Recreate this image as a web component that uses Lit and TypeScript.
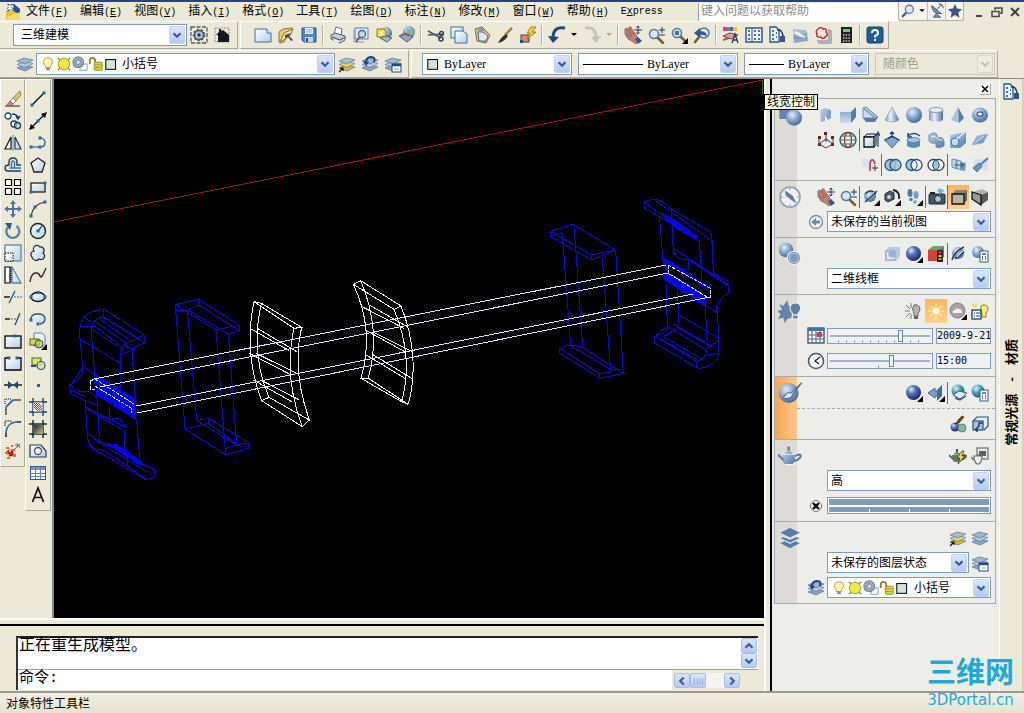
import { LitElement, html, svg, css, nothing, TemplateResult, SVGTemplateResult } from "lit";
import { customElement } from "lit/decorators.js";
import { classMap } from "lit/directives/class-map.js";

const NAVY = "#1b3a63";
const STEEL = "#5f83ad";

/* Shared icon pieces, all drawn in an 18 x 18 box */
const layers = (top = "#9db6cf", mid = "#b9cbdc", low = "#8aa4bf") => svg`
  <path d="M1 13l7-3 9 2-8 4z" fill=${low} stroke="#5a7693" stroke-width=".7"/>
  <path d="M1 9.500l7-3 9 2-8 4z" fill=${mid} stroke="#5a7693" stroke-width=".7"/>
  <path d="M1 6l7-3 9 2-8 4z" fill=${top} stroke="#5a7693" stroke-width=".7"/>`;
const lens = (x = 7, y = 7) => svg`
  <path d="M${x + 3} ${y + 3}l6 6" stroke="#7a5a38" stroke-width="2.600" stroke-linecap="round"/>
  <circle cx=${x} cy=${y} r="4.500" fill="#d5e6f7" stroke="#56789f" stroke-width="1.500"/>`;
const flyout = svg`<path d="M18 12v6h-6z" fill="#000"/>`;
const sphere = (x = 9, y = 9, r = 7) => svg`<circle cx=${x} cy=${y} r=${r} fill="url(#ball)"/>`;
const deep = svg`<circle cx="8.500" cy="8.500" r="7.500" fill="url(#deep)"/>`;
const dots = (...p: number[][]) => p.map(([x, y]) => svg`<rect x=${x - 1.5} y=${y - 1.5} width="3" height="3" fill="#1f6aa8"/>`);
const hand = svg`
  <path d="M1 3l2-1 2 2 0-3 2 0 2 4 3 3 1 3 3 3-4 4-4-3-4-2-3-5z" fill="#c08078" stroke="#7a4a48" stroke-width=".7"/>
  <path d="M3 4l5 6M5 3l5 6M2 8l5 3" stroke="#7f4c4a" stroke-width=".7" fill="none"/>
  <path d="M11 13l3-2 4 4-4 3z" fill="#35598c"/>
  <path d="M14 0v8M10 4h8M12.500 1.500L14 0l1.500 1.500M12.500 6.500L14 8l1.500-1.500" stroke="#1b3a63" fill="none"/>`;
const card = svg`<rect x="9" y="6" width="8" height="11" fill="#fff" stroke="#2b5c93"/><path d="M11 9h4M11 12h1M14 12h1M11 14h1M14 14h1" stroke="#2b5c93" stroke-width="1.500"/>`;
const teapot = (c = "url(#steel)", line = "#66809c") => svg`<path d="M3 8h10c0 4-1 6-2 7H5c-1-1-2-3-2-7zM5 7.500c0-3 6-3 6 0z" fill=${c}/><path d="M8 2v3" stroke=${line} stroke-width="2"/><path d="M13 9q4-2 4 0t-5 4M4 12L0 8" fill="none" stroke=${line} stroke-width="1.700"/>`;

const ICONS: Record<string, SVGTemplateResult> = {
  app: svg`<path d="M3 1h7l6 5v8H3z" fill="#234f96"/><path d="M2 9l6-2 8 5v5H2z" fill="#e8c23a"/><path d="M3 14l13-5v8H3z" fill="#f5dc6c"/><path d="M6 1v7M2 4h8M3 2l6 5M9 2L3 7" stroke="#fff" stroke-width="1.200"/>`,
  gear: svg`<rect x="1" y="1" width="16" height="16" fill="none" stroke="#4b5c6c" stroke-width="1.300" stroke-dasharray="4 1.500"/><circle cx="9" cy="9" r="5" fill="#8fa5b8" stroke="#3f5468" stroke-width="2.500" stroke-dasharray="2 1.500"/><circle cx="9" cy="9" r="4.500" fill="#b6c6d4" stroke="#3f5468" stroke-width="1.300"/><circle cx="9" cy="9" r="1.700" fill="#26384a"/>`,
  home: svg`<rect x="2" y="2" width="14" height="14" fill="none" stroke="#8a8f94" stroke-dasharray="2 1"/><path d="M3 9l3-3V3h2v2l2-1 6 5v7H5V9z" fill="#15181f"/>`,
  newfile: svg`<path d="M1 3h12l4 4v9H1z" fill="url(#sheet)" stroke="#3a6ea5"/><path d="M13 3v4h4" fill="#fff" stroke="#3a6ea5"/>`,
  open: svg`<path d="M2 6l4-3 9-1 1 2-4 3-5 9-4 1-1-1z" fill="#e6cf7a" stroke="#8f7430"/><path d="M3 16l4-9 9-4-3 7z" fill="#f3e4a2" stroke="#8f7430"/><path d="M8 9l6-2-2 3 4 4-2 1-3-4-3 1z" fill="#3d4e63"/>`,
  save: svg`<path d="M2 2h14v14H4l-2-2z" fill="#4f86c4" stroke="#23508a"/><rect x="5" y="2" width="8" height="6" fill="#e7f0fa"/><path d="M6 4h6M6 6h6" stroke="#7a9bc0" stroke-width=".8"/><rect x="5" y="11" width="8" height="5" fill="#c4d4e6"/><rect x="6" y="12" width="2" height="4" fill="#23508a"/>`,
  print: svg`<path d="M5 8l2-7 6 2-1 6z" fill="#fff" stroke="#5c6c80"/><path d="M2 9l4-2 10 3v4l-5 3-9-4z" fill="#c9ced8" stroke="#4c5c73"/><path d="M3 11l8 3 5-3" stroke="#3a4a62" fill="none"/><path d="M5 14l5 2" stroke="#fff" stroke-width="1.500"/>`,
  preview: svg`<path d="M3 2h13v11H3z" fill="#dbe9f6" stroke="#5d83ad"/><path d="M2 4v12h10" stroke="#7b9abb" fill="none"/><circle cx="10" cy="8" r="3.500" fill="#c3daf1" stroke="#3c6798" stroke-width="1.300"/><path d="M7.500 11L4 16" stroke="#7b5a39" stroke-width="2"/>`,
  publish: svg`${sphere(11, 7, 6)}<path d="M2 3h7l2 2v6H2z" fill="#f2d84e" stroke="#8e7d24"/><path d="M4 6l4 3M8 5l-4 5" stroke="#fff"/><path d="M5 12l6-2 6 2-5 4z" fill="#a8b8c8" stroke="#4e6175"/>`,
  web: svg`${sphere(11, 6, 6)}<path d="M9 2q4 3 6 1l2 4-5 4-4-2z" fill="#7fb48f"/><path d="M1 10l6-3 8 4-6 5z" fill="#8ea6c0" stroke="#41607f"/><path d="M3 10l4-2 4 2" stroke="#b8524a" stroke-width="1.500" fill="none"/>`,
  cut: svg`<path d="M1 5l13 7M1 9l15-1" stroke="#4a5566" stroke-width="1.500"/><circle cx="14" cy="13" r="2" fill="none" stroke="#2d3c57" stroke-width="1.500"/><circle cx="14.500" cy="7.500" r="2" fill="none" stroke="#2d3c57" stroke-width="1.300"/>`,
  copy: svg`<rect x="1" y="1" width="12" height="11" fill="url(#sheet)" stroke="#3a6ea5"/><path d="M5 5h8l4 3v9H5z" fill="url(#sheet)" stroke="#3a6ea5"/>`,
  paste: svg`<path d="M2 3l7-2 8 8-4 8-9-2z" fill="#e3c35d" stroke="#8d6f24"/><path d="M5 6h5l5 4-2 5H6z" fill="#dbe8f7" stroke="#4b6f9c"/><path d="M5 2l5 0 1 3-6 0z" fill="#8a98a8"/>`,
  brush: svg`<path d="M16 2L9 9" stroke="#a3804c" stroke-width="2.500"/><path d="M10 8l2 2q-4 6-10 7 3-6 8-9z" fill="#35332e"/>`,
  block: svg`<rect x="2" y="9" width="8" height="7" fill="#e98662" stroke="#24466f"/><path d="M12 1L8 7h3l-3 6 9-7h-4l4-5z" fill="#f5d427" stroke="#8a6c10" stroke-width=".8"/><rect x="1" y="14" width="3" height="3" fill="#1f4a80"/>`,
  undo: svg`<path d="M17 2Q5 0 5 12" fill="none" stroke="#21457b" stroke-width="3"/><path d="M0 10l5 7 6-6z" fill="#21457b"/>`,
  redo: svg`<path d="M2 2q11-2 11 10" fill="none" stroke="#c3c3bd" stroke-width="3"/><path d="M8 11l5 6 5-7z" fill="#c3c3bd"/>`,
  down: svg`<path d="M6 7h6l-3 3z" fill="#000"/>`,
  downoff: svg`<path d="M6 7h6l-3 3z" fill="#aca899"/>`,
  pan: hand,
  zoom: svg`${lens(7, 8)}<path d="M15 1v6M12 4h6M12 9h6" stroke="#1b3a63"/>`,
  zoomwin: svg`${lens()}<rect x="5" y="5" width="4" height="4" fill="#4d6f9b"/>${flyout}`,
  zoomprev: svg`<path d="M7 10l-5 6" stroke="#7a5a38" stroke-width="2.600" stroke-linecap="round"/><circle cx="11" cy="7" r="5" fill="#d5e6f7" stroke="#56789f" stroke-width="1.500"/><path d="M1 7l6-5v3q7 0 7 6-3-3-7-2v3z" fill="#31588c"/>`,
  props: svg`<path d="M1 1h14v4H1z" fill="#d93a92"/><path d="M5 1h3v4H5z" fill="#3cab54"/><path d="M8 1h3v4H8z" fill="#3767d1"/><path d="M11 1h4v4h-4z" fill="#f3b82d"/><path d="M1 10l7-3 8 2-7 4z" fill="#d3a59a" stroke="#76443e"/><path d="M10 17l3-9 3 9M11 14h4" fill="none" stroke="#27374d" stroke-width="1.300"/><path d="M1 14l6-2" stroke="#a85b4e" stroke-width="2"/>`,
  design: svg`<rect x="1" y="2" width="16" height="14" fill="#e9f2fb" stroke="#2c5686" stroke-width="1.500"/><path d="M7 2v14" stroke="#2c5686"/><path d="M3 5h2M3 9h2M3 13h2M9 5h2M13 5h2M9 9h2M13 9h2M9 13h2M13 13h2" stroke="#1e4877" stroke-width="1.500"/>`,
  palettes: svg`<path d="M2 1h6l3 3v12H2z" fill="#e6f0fa" stroke="#2c5686" stroke-width="1.300"/><path d="M4 5h2M4 9h2M4 13h2M8 7h1M8 11h1" stroke="#1e4877" stroke-width="1.700"/><path d="M9 4q5-1 6 6" fill="none" stroke="#1e3c66" stroke-width="1.500"/><path d="M12 10h5v6h-5z" fill="#33547e"/>`,
  sheets: svg`<path d="M2 3l13 1 2 4-14 2z" fill="#a8bfd6"/><path d="M2 9l14-2 1 8-14 2z" fill="#8ba8c6"/><path d="M4 6l10 6" stroke="#e9f1f8" stroke-width="3"/><path d="M3 12l13 0" stroke="#7089a4"/>`,
  markup: svg`<path d="M4 17h13V4M15 3v12H3" stroke="#6a7d92" fill="none"/><rect x="1" y="1" width="12" height="12" fill="#fbe9e6"/><path d="M4 3q3-3 5 0 4-1 3 3 3 3-1 5-2 3-4 0-5 1-4-3-2-3 1-5z" fill="none" stroke="#cf2b2b" stroke-width="1.500"/>`,
  calc: svg`<rect x="4" y="1" width="11" height="16" fill="#201f25"/><rect x="6" y="3" width="7" height="3" fill="#7fbf88"/><path d="M6 9h7M6 12h7M6 15h7" stroke="#d8c1c1" stroke-width="1.500" stroke-dasharray="1.500 1.200"/>`,
  help: svg`<rect x="1" y="1" width="16" height="16" rx="2" fill="#1f5e9c" stroke="#173f6c"/><path d="M6 7q0-3 3-3t3 3q0 2-3 3v1.500M9 13v2" fill="none" stroke="#fff" stroke-width="2"/>`,
  search: svg`<path d="M8 10l-5 5" stroke="#4a5b92" stroke-width="2.500" stroke-linecap="round"/><circle cx="10.500" cy="7" r="4.500" fill="#dfe8fc" stroke="#6679ad" stroke-width="1.500"/>`,
  dish: svg`<path d="M3 3q1 10 11 9z" fill="#7d93b6" stroke="#2c456f"/><path d="M8 8l5-5M8 12l-3 4h8z" stroke="#2c456f" fill="#8fa3c0"/><path d="M12 2l3 1M11 1q5 0 5 5" stroke="#2c456f" fill="none"/>`,
  star: svg`<path d="M9 1l2.300 5.300L17 7l-4.300 3.700L14 16.500 9 13.500 4 16.500l1.300-5.800L1 7l5.700-.7z" fill="#3c5682"/>`,
  layer: layers(),
  layermake: svg`${layers("#a9bfd3", "#f0d75b", "#d8b93a")}<path d="M1 17l4-4M2 13h3v3" stroke="#111" fill="none" stroke-width="1.200"/>`,
  layerprev: svg`${layers()}<path d="M5 8q0-6 5-6t3 5" fill="none" stroke="#1f4478" stroke-width="2"/><path d="M2 6l3 5 3-4z" fill="#1f4478"/>`,
  layerstate: svg`${layers()}<rect x="8" y="9" width="9" height="8" fill="#fff" stroke="#1c4e8a"/><path d="M8 10h9" stroke="#1c4e8a" stroke-width="2.500"/><path d="M10 14h5" stroke="#8aa" />`,
  bulb: svg`<path d="M9 2q5 0 5 5 0 2-2 4v2H6v-2Q4 9 4 7q0-5 5-5z" fill="#fdf6a5" stroke="#b19b3d"/><path d="M7 13h4v3H7z" fill="#8e8e7c"/>`,
  sun: svg`<path d="M2 2l14 14M16 2L2 16" stroke="#9a8f33" stroke-width="1.500"/><circle cx="9" cy="9" r="6.500" fill="#f5ea3c" stroke="#98902c"/>`,
  freeze: svg`<rect x="9" y="9" width="8" height="7" fill="#fff" stroke="#8a97a6"/><circle cx="7" cy="7" r="6" fill="#a4b4c3" stroke="#6f8395" stroke-width="1.300"/><path d="M7 2v10M2 7h10M3.500 3.500l7 7M10.500 3.500l-7 7" stroke="#7b8fa2"/><circle cx="7" cy="7" r="2.500" fill="#d5dee6" stroke="#6f8395"/>`,
  lock: svg`<path d="M2 9V5q0-3 3-3t3 3v3" fill="none" stroke="#8d8426" stroke-width="2"/><rect x="7" y="7" width="9" height="9" rx="1" fill="#e3d83a" stroke="#8d8426"/><path d="M8 10h7M8 13h7" stroke="#8d8426" stroke-width=".8"/>`,
  swatch: svg`<rect x="2" y="4" width="11" height="11" fill="#d3e2dc" stroke="#111" stroke-width="1.200"/>`,
  erase: svg`<path d="M1 16h15" stroke="#222"/><path d="M16 1L9 8l3 3 5-6z" fill="#dcc85a" stroke="#6d6222" stroke-width=".7"/><path d="M9 8l3 3-3 3-3-3z" fill="#eef0f3" stroke="#666" stroke-width=".7"/><path d="M6 11l3 3-2 2H4l-1-1z" fill="#d77d78" stroke="#7c3e3b" stroke-width=".7"/>`,
  copyobj: svg`<circle cx="4" cy="4" r="3" fill="#fff" stroke=${NAVY} stroke-width="1.300"/><circle cx="10" cy="12" r="3" fill="#fff" stroke=${NAVY} stroke-width="1.300"/><circle cx="13.500" cy="13.500" r="3" fill="#cfe0f2" fill-opacity=".6" stroke=${NAVY} stroke-width="1.300"/><path d="M8 2q5 0 6 4M12 4l2 3 2-3" fill="none" stroke=${NAVY} stroke-width="1.500"/>`,
  mirror: svg`<path d="M7 3v12H1z" fill="#fff" stroke="#111" stroke-width="1.200"/><path d="M11 3v12h6z" fill="#cfe0f2" stroke=${NAVY} stroke-width="1.200"/><path d="M9 1v16" stroke=${STEEL}/>`,
  offset: svg`<path d="M17 15H4q-3 0-3-3t4-3V6q0-4 4-4t4 4v3h4" fill="none" stroke=${NAVY} stroke-width="1.400"/><path d="M17 12H5.500M7.500 12V7q0-2 1.500-2t1.500 2v5" fill="none" stroke="#3572b0" stroke-width="1.400"/>`,
  array: svg`<path d="M1.500 1.500h6v6h-6zM10.500 10.500h6v6h-6zM1.500 10.500h6v6h-6zM10.500 1.500h6v6h-6z" fill="#fff" stroke="#000" stroke-width="1.200"/>`,
  move: svg`<path d="M9 0l3 4h-2v4h4V6l4 3-4 3v-2h-4v4h2l-3 4-3-4h2v-4H4v2L0 9l4-3v2h4V4H6z" fill="#4d769f"/>`,
  rotate: svg`<path d="M12.500 4A6.500 6.500 0 1 1 4 5" fill="none" stroke="#5f7f9f" stroke-width="2.300"/><path d="M1 1l7 0-2 7z" fill="#2c5780"/>`,
  scale: svg`<rect x="1" y="1" width="16" height="16" fill="url(#sheet)" stroke=${STEEL} stroke-width="1.300"/><rect x="1" y="9" width="8" height="8" fill="#fff" stroke="#000" stroke-dasharray="1.500 1"/>`,
  stretch: svg`<path d="M8 1v16h9z" fill="url(#sheet)" stroke=${STEEL} stroke-width="1.300"/><path d="M1 1h5v16H1z" fill="#fff" stroke="#000" stroke-width="1.200"/><path d="M7 1v16" stroke="#000" stroke-dasharray="1 1"/>`,
  trim: svg`<path d="M0 9h6" stroke="#000" stroke-width="1.300"/><path d="M10 9h8" stroke="#3572b0" stroke-dasharray="2 1"/><path d="M5 15L11 3" stroke="#244d77" stroke-width="1.300"/>`,
  extend: svg`<path d="M1 9h5" stroke="#000" stroke-width="1.300"/><path d="M7 9h5" stroke="#3572b0" stroke-dasharray="2 1"/><path d="M11 15l5-12" stroke="#244d77" stroke-width="1.300"/>`,
  breakpt: svg`<rect x="1" y="4" width="16" height="12" fill="url(#sheet)" stroke="#000" stroke-width="1.300"/>${dots([11, 4])}`,
  breakln: svg`<path d="M5 4H1v12h16V4h-4" fill="url(#sheet)" stroke="#000" stroke-width="1.300"/>${dots([5, 4], [13, 4])}`,
  join: svg`<path d="M0 9h18" stroke="#000" stroke-width="1.300"/><path d="M4 5l5 4-5 4zM14 5L9 9l5 4z" fill="#214a73"/>`,
  chamfer: svg`<path d="M2 17V9l7-7h8" fill="none" stroke="#000"/><path d="M2 9l7-7" stroke="#2f6ba5" stroke-width="1.800"/><path d="M1 6V1h7" fill="none" stroke="#000" stroke-dasharray="1 1"/>`,
  fillet: svg`<path d="M2 17v-5Q3 3 12 2h5" fill="none" stroke="#2f6ba5" stroke-width="1.600"/><path d="M2 17v-4M13 2h4M1 6V1h7" fill="none" stroke="#000" stroke-dasharray="1.500 1"/>`,
  explode: svg`<circle cx="6" cy="11" r="3.500" fill="#a82a17"/><path d="M2 5h3v2H2zM8 7h3v2H8zM1 10h3v2H1zM9 12h3v3H9zM3 15h3v2H3zM7 3h2v2H7z" fill="#e86a2c"/><path d="M5 8h2v2H5zM3 12h2v2H3z" fill="#f8c651"/><path d="M9 9l7-7M11 3l5 1M13 1l3 5" stroke="#66707c"/>`,
  line: svg`<path d="M3 15L15 3" stroke="#000" stroke-width="1.300"/>${dots([3, 15], [15, 3])}`,
  xline: svg`<path d="M2 16L16 2" stroke="#000" stroke-width="1.300"/><path d="M0 18l2-6 4 4zM18 0l-6 2 4 4z" fill="#000"/>${dots([9, 9])}`,
  pline: svg`<path d="M2 13h9q5 0 5-4t-4-5" fill="none" stroke="#254e78" stroke-width="1.200"/>${dots([2, 13], [11, 13], [11, 4])}`,
  polygon: svg`<path d="M9 2l7 5-3 9H5L2 7z" fill="url(#sheet)" stroke="#222" stroke-width="1.300"/>`,
  rect: svg`<rect x="2" y="5" width="14" height="9" fill="url(#sheet)" stroke="#222" stroke-width="1.300"/>${dots([2, 14], [16, 5])}`,
  arc: svg`<path d="M2 16Q4 4 16 2" fill="none" stroke="#222" stroke-width="1.200"/>${dots([2, 16], [6, 7], [16, 2])}`,
  circle: svg`<circle cx="9" cy="9" r="7.500" fill="url(#sheet)" stroke="#222" stroke-width="1.400"/><path d="M9 9l4-5" stroke="#1f6aa8" stroke-width="1.500"/>${dots([9, 9])}`,
  cloud: svg`<path d="M5 7a3.500 3.500 0 1 1 6-4 3.500 3.500 0 0 1 3 6 3.500 3.500 0 1 1-4 6 4 4 0 0 1-7-2 3.500 3.500 0 0 1 2-6z" fill="url(#sheet)" stroke="#222" stroke-width="1.200"/>`,
  spline: svg`<path d="M1 16Q2 8 6 7t5 3 6-8" fill="none" stroke="#222" stroke-width="1.300"/>`,
  ellipse: svg`<ellipse cx="9" cy="9" rx="7" ry="4.500" fill="url(#sheet)" stroke="#111" stroke-width="1.400"/>${dots([2, 9], [16, 9], [9, 4.5])}`,
  ellarc: svg`<path d="M2 9q0-5 7-5t7 5q0 4-5 5" fill="url(#sheet)" stroke="#35526f" stroke-width="1.400"/>${dots([2, 10], [9, 14])}`,
  insblock: svg`<path d="M5 1h8l3 3v10H5z" fill="#e9f1fb" stroke=${STEEL}/><rect x="1" y="7" width="9" height="6" fill="#d8de4b" stroke="#46631f"/><circle cx="10" cy="12" r="4" fill="#b9cf6a" fill-opacity=".7" stroke="#2d552c"/>${flyout}`,
  mkblock: svg`<rect x="3" y="4" width="9" height="7" fill="#e2e46a" stroke="#46631f"/><circle cx="12" cy="11.500" r="4" fill="#dfe49a" fill-opacity=".8" stroke="#26517c" stroke-width="1.200"/><path d="M2 12h5" stroke="#26517c" stroke-width="2"/>`,
  point: svg`<rect x="8" y="8" width="3" height="3" fill="#1f6aa8"/>`,
  hatch: svg`<path d="M4 0v18M14 0v18M0 4h18M0 14h18" stroke="#1b3a63" stroke-width="1.300"/><rect x="4.500" y="4.500" width="9" height="9" fill="#fff"/><path d="M5 5l8 8M5 9l4 4M9 5l4 4M5 7l6 6M7 5l6 6" stroke="#2b5c93"/>`,
  gradient: svg`<path d="M4 0v18M14 0v18M0 4h18M0 14h18" stroke="#1b2a43" stroke-width="1.500"/><path d="M5 5h9v9H5z" fill="url(#olive)"/>`,
  region: svg`<path d="M1 3h11l5 6v6H1z" fill="url(#sheet)" stroke=${NAVY} stroke-width="1.200"/><circle cx="9" cy="9" r="3.500" fill="#fff" stroke="#3c556f" stroke-width="1.300"/>`,
  table: svg`<rect x="1.500" y="2.500" width="15" height="13" fill="#fff" stroke="#33588f"/><path d="M2 3h14v3H2z" fill="#6f93c8"/><path d="M6.500 3v12M11.500 3v12M2 9.500h14M2 12.500h14" stroke="#5c82bb"/>`,
  text: svg`<path d="M3.500 16L9 2l5.500 14M5.500 11.500h7" fill="none" stroke="#111" stroke-width="1.700"/>`,
  polysolid: svg`<path d="M3 4l5-2 3 1v5l-3 1v6l-4 1z" fill="url(#steel)" opacity=".75"/><path d="M8 9l3-1V3l3 1v8l-3 2z" fill="#7ea1c6"/>`,
  box: svg`<path d="M1 6l5-5h11l-5 5z" fill="#e2edf8"/><path d="M1 6h11v11H1z" fill="url(#steelv)"/><path d="M12 6l5-5v10l-5 6z" fill="#587ba6"/>`,
  wedge: svg`<path d="M2 2l12 10H2z" fill="#c8dcf0" stroke="#6f8fb1"/><path d="M2 2l3-1 12 10-3 1z" fill="#a9c4de" stroke="#6f8fb1"/><path d="M2 12h12l3-1-3 5H5z" fill="#587ba6"/>`,
  cone: svg`<path d="M9 1L2 14q7 4 14 0z" fill="url(#steelh)" stroke="#7d95ae" stroke-width=".6"/>`,
  sphere: sphere(9, 9, 8),
  cylinder: svg`<path d="M2 4v10q7 4 14 0V4z" fill="url(#steelh)"/><ellipse cx="9" cy="4" rx="7" ry="2.500" fill="#e3edf7" stroke="#6f8cab" stroke-width=".8"/>`,
  pyramid: svg`<path d="M9 1L2 14l8 3z" fill="#a9c3dd"/><path d="M9 1l1 16 5-5z" fill="#557ba8"/>`,
  torus: svg`<ellipse cx="9" cy="9" rx="8" ry="7.500" fill="url(#ball)"/><ellipse cx="9" cy="8" rx="3" ry="2.200" fill="#e9eef4" stroke="#3f6087" stroke-width="1.300"/>`,
  ucs: svg`<path d="M9 2v6l-7 5M9 8l7 5M2 6v7l7 4 7-4V6" fill="none" stroke="#5c3f3f"/><path d="M7 1h3v3H7zM1 5h3v3H1zM14 5h3v3h-3zM1 12h3v3H1zM14 12h3v3h-3z" fill="#7a1f1f"/><circle cx="9" cy="9" r="1.500" fill="#1d6ca8"/>`,
  helix: svg`<ellipse cx="9" cy="9" rx="8" ry="7.500" fill="#eaf2ea" stroke="#2c4d7a" stroke-width="1.300"/><ellipse cx="9" cy="9" rx="3.500" ry="7.500" fill="none" stroke="#b13434" stroke-width="1.300"/><path d="M1 9h16M3 5h12M3 13h12" stroke="#2f7b50"/>`,
  extrude: svg`<path d="M2 6l3-3h9l-2 3z" fill="#dbe8f5" stroke="#111"/><path d="M2 6h10v10H2z" fill="url(#sheet)" stroke="#111" stroke-width="1.300"/><path d="M12 16l2-2V4" stroke="#111" fill="none"/><path d="M16 16V2M14 5l2-4 2 4" stroke="#1f4a80" fill="none" stroke-width="1.300"/>`,
  presspull: svg`<path d="M9 1v7M7 3l2-2 2 2M2 9l7-4 7 4-7 4z" fill="none" stroke=${NAVY} stroke-width="1.300"/><path d="M2 9l7-3 7 3-7 8z" fill="#86a6ca" stroke=${NAVY} stroke-dasharray="2 1"/>`,
  revolve: svg`<path d="M2 9h13v6q-6 4-13 0z" fill="#5f88b8"/><ellipse cx="8.500" cy="9" rx="6.500" ry="2.500" fill="#a9c6e2" stroke=${STEEL}/><path d="M3 5q6-5 12 0M3 2v4h4" fill="none" stroke="#1f4a80" stroke-width="1.500"/>`,
  sweep: svg`<path d="M2 4q6-4 8 0v3q6-2 7 3v5q-5 3-8 1v-4q-6 1-7-3z" fill="url(#steel)" stroke="#58789d" stroke-width=".8"/><path d="M4 6q3-2 6 1t6 2" stroke="#e6eff8" fill="none"/>`,
  loft: svg`<path d="M1 4l6-1 10-2v11l-6 5H1z" fill="url(#steel)"/><circle cx="6" cy="11" r="4" fill="#c8dbee" stroke="#4b6d96"/><path d="M8 8l8-7" stroke="#eef4fa" stroke-width="1.500"/>`,
  plane: svg`<path d="M1 14L6 5l11-2-5 9z" fill="url(#steel)" stroke="#9db4cc" stroke-width=".7"/><path d="M4 12l9-7" stroke="#dbe7f3"/>`,
  slice: svg`<path d="M1 2l7 2v9L1 10z" fill="#d6def0" opacity=".8"/><path d="M9 15V7q1-5 4-2l1 3" fill="none" stroke="#c02a52" stroke-width="1.500"/><path d="M14 9v6M11 12h6" stroke="#333"/>`,
  union: svg`<circle cx="6.500" cy="9" r="5.500" fill="#9fc7de" stroke="#1e4d78" stroke-width="1.300"/><circle cx="11.500" cy="9" r="5.500" fill="#9fc7de" fill-opacity=".8" stroke="#1e4d78" stroke-width="1.300"/>`,
  subtract: svg`<circle cx="6.500" cy="9" r="5.500" fill="#9fc7de" stroke="#1e4d78" stroke-width="1.300"/><circle cx="11.500" cy="9" r="5.500" fill="#fff" fill-opacity=".9" stroke="#1e4d78" stroke-width="1.300"/><path d="M9 4a5.500 5.500 0 0 1 0 10" fill="none" stroke="#1e4d78"/>`,
  intersect: svg`<circle cx="6.500" cy="9" r="5.500" fill="#fff" stroke="#333f4e" stroke-width="1.300"/><circle cx="11.500" cy="9" r="5.500" fill="#fff" stroke="#333f4e" stroke-width="1.300"/><path d="M9 4a5.500 5.500 0 0 1 0 10a5.500 5.500 0 0 1 0-10" fill="#9fc7de" stroke="#1e4d78"/>`,
  solidedit: svg`<path d="M2 3l5 1v9l-5-2zM6 4l5 1v9l-5-2z" fill="#c9dae9" stroke="#6f8ca9"/><path d="M10 6l6 1-1 8-5-1z" fill="#6f93bb"/><path d="M4 9h9M11 7l3 2-3 2" stroke="#315a88" fill="none"/>`,
  align3d: svg`<path d="M3 3h14v11H3z" fill="#d3e1ee"/><path d="M2 12l6-5 3 3-5 6z" fill="#6d92bd" stroke="#35597f" stroke-width=".7"/><path d="M9 9l8-7" stroke="#5b7ea6" stroke-width="2"/>`,
  orbit: svg`${sphere(8, 8, 6)}<path d="M3 14L15 3M3 6q6-6 11 0" stroke="#31475f" fill="none" stroke-width="1.500"/><path d="M6 10l6-6" stroke="#eef" />${flyout}`,
  camera: svg`<path d="M2 6l5-3 4 2v6l-6 3-3-2z" fill="#4f5a67" stroke="#22282f"/><circle cx="6" cy="9" r="2" fill="#c9d6e3"/><path d="M10 2q7 1 6 9" stroke="#222" fill="none" stroke-width="1.800"/>${flyout}`,
  walk: svg`<ellipse cx="5" cy="5" rx="2.500" ry="4" fill="#4c7ba6"/><ellipse cx="6" cy="11.500" rx="1.800" ry="1.800" fill="#4c7ba6"/><ellipse cx="11" cy="7" rx="2.500" ry="4" fill="#78a0c5"/><ellipse cx="10" cy="14" rx="1.800" ry="1.800" fill="#78a0c5"/>${flyout}`,
  snapshot: svg`<rect x="1" y="6" width="16" height="10" rx="1" fill="#46576a" stroke="#1c2733"/><path d="M2 4h5v2H2z" fill="#222"/><circle cx="10" cy="11" r="3.500" fill="#abc5dd" stroke="#16202a"/><path d="M12 0v7M9 3h7M10 1l5 5M15 1l-5 5" stroke="#5c97cb"/>`,
  parallel: svg`<path d="M2 6l4-4h11l-3 4z" fill="#8a8178"/><path d="M14 6l3-4v10l-3 4z" fill="#6c645c"/><path d="M2 6h12v10H2z" fill="#b9b2a6" stroke="#111" stroke-width="1.300"/>`,
  perspective: svg`<path d="M1 4l10-3 6 3-7 3z" fill="#b3b3b1"/><path d="M10 7l7-3v8l-7 5z" fill="#5a5a5a"/><path d="M1 4l9 3v10l-9-6z" fill="#9b9b99" stroke="#111" stroke-width="1.300"/>`,
  prevview: svg`<circle cx="9" cy="9" r="6.500" fill="#f2f4f6" stroke="#6f8aa6" stroke-width="1.300"/><path d="M4 9l5-4v2.500h4v3H9V13z" fill="#6b8fb5"/>`,
  glassbox: svg`<path d="M2 6l4-4h11v9l-4 5H2z" fill="#b9cbe4"/><rect x="3" y="6" width="9" height="9" fill="#dce6f4" stroke="#8ba2c2"/><circle cx="9" cy="9" r="3.500" fill="#9db3d3"/>`,
  vsphere: svg`${deep}${flyout}`,
  colorbox: svg`<path d="M1 5l5-4h11l-4 4z" fill="#54b06b"/><path d="M1 5h10v11H1z" fill="#d9403a"/><path d="M11 5l6-4v11l-6 4z" fill="#5579c2"/><rect x="10" y="5" width="6" height="12" fill="#1c2a1e"/><rect x="11.500" y="6.500" width="3" height="2" fill="#e33"/><rect x="11.500" y="10" width="3" height="2" fill="#eb3"/><rect x="11.500" y="13" width="3" height="2" fill="#4c4"/>`,
  vmanage: svg`${sphere(8, 8, 6)}<path d="M2 15q2-8 12-13M5 14l9-7" stroke="#29394b" stroke-width="1.500" fill="none"/><path d="M7 12l6-6" stroke="#fff"/>`,
  vcard: svg`${sphere(7, 7, 6)}${card}`,
  lightoff: svg`<path d="M6 1v5M1 3l4 4M0 9h5M1 15l4-4M6 17v-5" stroke="#777"/><path d="M9 3q5-1 6 4 0 3-2 4v3H9v-3Q6 7 9 3z" fill="#b5b5b0" stroke="#666"/><path d="M9 14h4v3H9z" fill="#666"/>`,
  sunlight: svg`<path d="M9 1v16M1 9h16M3.500 3.500l11 11M14.500 3.500l-11 11" stroke="#ffe9a0" stroke-width="1.500"/><circle cx="9" cy="9" r="4" fill="#fffbe0" stroke="#ffd45e"/>`,
  sky: svg`<circle cx="8.500" cy="8.500" r="7.500" fill="#a4a4a2" stroke="#7d7d7b"/><path d="M4 11q-1-3 2-3 1-3 4-1 3 0 3 4z" fill="#f4f4f2"/>${flyout}`,
  lightlist: svg`<path d="M5 1v4M1 2l3 3" stroke="#e0b820"/><path d="M12 3q5 0 5 4 0 2-2 4v4h-4v-4Q8 3 12 3z" fill="#faec66" stroke="#8d7d20"/><rect x="1" y="8" width="9" height="9" fill="#fff" stroke="#1c3c78" stroke-width="1.300"/><path d="M3 11h1M5 11h4M3 14h1M5 14h4" stroke="#1c3c78"/>`,
  calendar: svg`<rect x="1" y="1" width="16" height="15" fill="#fff" stroke="#2a4a7a" stroke-width="1.300"/><path d="M1 1h16v3H1z" fill="#3f72ae"/><path d="M5 4v12M9 4v12M13 4v12M1 8h16M1 12h16" stroke="#3d628f"/><rect x="10" y="5" width="5" height="5" fill="#d63a3a"/>`,
  clock: svg`<circle cx="9" cy="9" r="7.500" fill="#fff" stroke="#4c5a78" stroke-width="1.600"/><path d="M13 5L8 9l4 3" fill="none" stroke="#222" stroke-width="1.300"/>`,
  attach: svg`<path d="M1 9l7-5v3h3v5H8v2z" fill="#7aa1c9" stroke="#42688f"/><path d="M10 6l5-5v11l-5 5z" fill="#3670a8"/>${flyout}`,
  matlayer: svg`<circle cx="8" cy="7" r="6.500" fill="url(#teal)"/><path d="M3 11l6-4 8 2-7 6z" fill="#e6eef3" stroke="#345d7e"/><path d="M5 14l5 2 6-4" fill="none" stroke="#345d7e" stroke-width="1.400"/>`,
  matcard: svg`<circle cx="7" cy="7" r="6.500" fill="url(#teal)"/>${card}`,
  matbrush: svg`<circle cx="6" cy="12" r="4.500" fill="url(#deep)"/><circle cx="13" cy="13" r="4" fill="#81bb97" stroke="#4e8a68"/><path d="M5 9q3 0 4-4l4-4 2 1-5 6z" fill="#7b3a22" stroke="#3e1d10" stroke-width=".6"/>`,
  mapping: svg`<path d="M2 6l4-4h11v9l-4 4" fill="#e5edf6" stroke="#2a4f80" stroke-width="1.200"/><rect x="2" y="6" width="10" height="9" fill="#a9c3e0" stroke="#2a4f80" stroke-width="1.200"/><path d="M4 15l4-4V8h4M6 17v-4" fill="none" stroke="#1d3d6d" stroke-width="1.500"/>`,
  render: svg`${teapot("#5c7a6e", "#3f5a50")}<path d="M13 4l-5 7h3l-2 6 7-8h-3l2-5z" fill="#f4df2a" stroke="#222" stroke-width=".7"/>`,
  renderwin: svg`<rect x="6" y="1" width="11" height="11" fill="#e6ece8" stroke="#6c7c74" stroke-width="1.300"/><path d="M8 4h7v5H8z" fill="#4f665e"/><path d="M3 9h8q0 6-3 8H6q-3-2-3-8z" fill="#eef1ef" stroke="#5d6f67" stroke-width="1.200"/><path d="M3 13L0 10M7 7v2" stroke="#5d6f67" stroke-width="1.300"/>`,
  cancel: svg`<circle cx="9" cy="9" r="5.500" fill="#fff" stroke="#777"/><path d="M6 6l6 6M12 6l-6 6" stroke="#000" stroke-width="2.300"/>`,
  /* Section emblems */
  bigsolid: svg`<rect x="1" y="2" width="10" height="10" fill="#5f86b4"/>${sphere(12, 11, 6)}`,
  bigcompass: svg`<circle cx="9" cy="9" r="7.500" fill="#eef0f3" stroke="#8ba0b6" stroke-width="1.200"/><path d="M5 4l6 4 3 6-3-2-5-4z" fill="#5b7ea8"/><path d="M9 2.500v1M9 14.500v1M2.500 9h1M14.500 9h1" stroke="#7d93ac"/>`,
  bigvisual: svg`${sphere(6, 6, 5.5)}<circle cx="12" cy="12" r="5" fill="#5f82ad" stroke="#eef2f6" stroke-width="1"/><circle cx="12" cy="12" r="3.500" fill="#7f9dc0" stroke="#b7c8da" stroke-width=".8"/>`,
  biglight: svg`<path d="M7 1l1 4 3 1-1 8-3 1-2 3-1-4-4 1 2-4-3-2 4-1-2-4 3 1z" fill="#6485ab"/><path d="M13 3q4 0 4 4 0 2-2 4v4h-4v-4Q9 9 9 7q0-4 4-4z" fill="#5d80aa" stroke="#eef2f6" stroke-width=".8"/><path d="M11 12h4" stroke="#eef2f6"/>`,
  bigmaterial: svg`<circle cx="8" cy="9" r="7.500" fill="url(#ball)"/><path d="M18 1L10 9q-4-1-6 4 6 1 7-3z" fill="#dfe9f4" stroke="#4c6d98" stroke-width=".8"/>`,
  bigteapot: svg`<g stroke="#f4f5f7" stroke-width="2" stroke-linejoin="round"><path d="M4 8h10c0 4-1 6-3 7H7c-2-1-3-3-3-7z" fill="#5f83ad"/></g>${teapot()}`,
  biglayer: svg`<path d="M1 13l4-2 4 2 4-2 4 2-8 4zM1 9l3-1 5 2 5-2 3 1-8 4zM1 5l8-4 8 4-8 4z" fill="#587ea8" stroke="#f2f4f6" stroke-width=".6"/>`,
};

const glyph = (name: string, cls = "ico") =>
  html`<svg class=${cls} viewBox="0 0 18 18" aria-hidden="true">${ICONS[name]}</svg>`;

const chevron = (d: string) =>
  html`<svg viewBox="0 0 16 16" aria-hidden="true"><path d=${d} fill="none" stroke="#3d5a94" stroke-width="2.500"/></svg>`;
const DOWN = "M4 6l4 4 4-4";

interface ToolSpec { name: string; sep?: boolean; active?: boolean; narrow?: boolean }
type Tool = string | ToolSpec;

const tool = (t: Tool) => {
  const o: ToolSpec = typeof t === "string" ? { name: t } : t;
  return html`<button
    class=${classMap({ tool: true, sep: !!o.sep, active: !!o.active, narrow: !!o.narrow })}
    aria-label=${o.name}>${glyph(o.name)}</button>`;
};
const S = (name: string): ToolSpec => ({ name, sep: true });

const LAYER_FLAGS = ["bulb", "sun", "freeze", "lock", "swatch"];

interface ComboOpts { cls?: string; flags?: string[]; rule?: boolean; disabled?: boolean }
const combo = (label: string, value: string, o: ComboOpts = {}) => html`
  <label class="combo ${o.cls ?? ""}">
    ${o.flags ? html`<span class="flags">${o.flags.map((f) => glyph(f))}</span>` : nothing}
    ${o.rule ? html`<span class="rule"></span>` : nothing}
    <select aria-label=${label} ?disabled=${!!o.disabled}><option>${value}</option></select>
    <span class="arrow">${chevron(DOWN)}</span>
  </label>`;

const group = (name: string, emblem: string, rows: TemplateResult, cls = "") => html`
  <section class="group ${cls}" aria-label=${name}>
    <div class="strip">${glyph(emblem, "emblem")}</div>
    <div class="rows">${rows}</div>
  </section>`;

/** Wireframe model shown in the drawing area. */
@customElement("wire-scene")
class WireScene extends LitElement {
  static styles = css`
    :host { display: block; background: #000; overflow: hidden; }
    svg { display: block; width: 100%; height: 100%; }
    path { fill: none; vector-effect: non-scaling-stroke; shape-rendering: crispEdges; }
    .b { stroke: #0a0ad8; }
    .band { fill: #0505e6; stroke: #0505e6; }
    .w { stroke: #eef0e6; }
    .r { stroke: #d6e2ff; }
    .axis { stroke: #a01010; }
    .ydir { stroke: #1c7a1c; }
  `;
  render() {
    return html`<svg viewBox="54 79 710 539" preserveAspectRatio="xMidYMid slice" role="img" aria-label="wireframe">
      <path class="axis" d="M54 222L763 80"/>
      <path class="ydir" d="M762 80v14"/>
      <g transform="translate(50 190) scale(.33333)">
        <path class="b" d="M90 448V410Q96 375 125 366L160 357 283 435V460Q250 465 246 492M125 440V412Q132 384 162 380V357M162 383L283 458M100 380L125 398M90 410H125M212 520V492Q215 462 240 455L283 435M90 448L212 520M90 445L98 530M125 440L135 560M212 520V600M246 490L257 640"/>
        <path class="b" d="M126 402L213 470M132 392L232 462M145 384L240 452M160 380L262 444M125 418L212 476M212 492L248 480M225 468L255 480"/>
        <path class="b" d="M98 530L140 556M98 530L95 560 58 585 62 610 105 632M58 585L90 606Q128 596 140 628M105 630L107 655 225 724V785M107 655L112 735Q114 776 150 788M140 610L148 742M180 650V690Q212 674 226 712M148 672L180 692M260 690L270 820M112 732L313 840M112 740Q120 782 160 780L290 868M150 788L285 868 315 862V840L270 820M230 780L235 835M128 745L290 845"/>
        <path class="band" d="M135 552L257 628V688L140 615 138 596 150 590 135 580z"/>
        <path class="b" d="M105 632L140 645M105 650L225 712M60 598L105 620M98 533L60 590"/>
        <path class="band" d="M175 762L200 764 274 815 270 826z"/>
        <path class="b" d="M376 345L445 328 568 405V423L530 432M376 345L498 420 568 405M376 345L380 362 412 360M445 328V345L412 360 535 432M445 345L568 422M376 345L405 717M412 360L440 690M498 420L527 795M535 430L560 765M405 717L475 700V685L440 692M405 717L527 795 595 775V758L475 685M440 692L560 765 595 758M475 700L572 770M527 775L560 765"/>
        <path class="w" d="M612 335L634 340 755 412 732 415zM612 335Q580 490 635 632M634 340Q600 490 657 622M755 412Q725 540 778 690M732 415Q700 560 757 710M635 632L757 710 778 690 657 622zM600 415L718 482M622 415L740 485M598 490L720 553M618 490L740 550M610 570L725 635M632 570L748 630"/>
        <path class="w" d="M910 283L932 272 1053 348 1032 358zM910 283Q975 420 933 565M932 272Q995 420 955 565M1032 358Q1092 500 1055 635M1053 348Q1113 500 1075 643M933 565L1055 635 1075 643 955 565zM936 350L1062 415M958 345L1075 412M946 420L1068 487M968 425L1090 487M944 492L1068 567M966 492L1088 567"/>
      </g>
      <g transform="translate(530 190) scale(.33333)">
        <path class="b" d="M62 125L128 102 255 180 185 195zM62 125V140L185 210V195M185 210L255 180M62 140L97 128M97 130L122 468M132 103L158 472M217 205L242 545M257 180L280 550M90 475L122 465 158 472 280 550 210 565 90 490zM90 475L210 552V565M122 468L245 540 280 537M210 552L245 545"/>
        <path class="b" d="M343 35L370 27Q400 30 425 58L535 122Q550 140 545 162M343 35V55L388 80 508 152M343 35L388 72M370 27L540 150M425 58L430 195M388 75L400 225M508 150L517 290M545 130L550 250M430 175L597 285V310Q560 325 560 370M430 180Q436 212 475 208V240M475 208L597 290M400 225L475 240M550 250L597 275"/>
        <path class="band" d="M388 68L425 84 500 138 505 152 440 116z"/>
        <path class="band" d="M400 206L420 214 540 292V300L415 225V248L530 320 524 348 403 268 402 250 412 244z"/>
        <path class="b" d="M403 268L563 370M560 345L567 445V490Q555 532 505 535L375 460V438L410 410M408 280L412 410Q410 430 375 438M442 300L447 395Q445 420 400 440M375 438L500 515V533M500 515Q530 505 532 475L526 340M447 375L567 445M412 410L530 480M430 402L548 470M400 440L520 510M390 445L505 512M440 412L540 468M532 475L567 450M530 495L565 490"/>
      </g>
      <path class="r" d="M94 379L666 265M100 387L668 273M136 406L693 294M137 413L710 297"/>
      <path class="r" d="M90 381v8l5 1M90 381l5-2 39 25M95 386l36 22v5M668 265v8l39 24h3v-9z" stroke-dasharray="4 1"/>
    </svg>`;
  }
}

@customElement("app-root")
class AppRoot extends LitElement {
  static styles = css`
    :host {
      display: flex; flex-direction: column; height: 100vh; position: relative; overflow: hidden;
      background: #ece9d8; color: #000;
      font: 12px/16px "Liberation Serif", "Noto Sans CJK SC", serif;
    }
    * { box-sizing: border-box; }
    button, select, input { font: inherit; color: inherit; margin: 0; padding: 0; border: 0; background: none; outline: 0; border-radius: 0; }
    .defs { position: absolute; width: 0; height: 0; }
    .mono { font-family: "Liberation Mono", monospace; font-size: 10px; }
    .ico { width: 18px; height: 18px; flex: none; display: block; }

    .menubar { display: flex; align-items: center; height: 21px; border-top: 2px solid #2b408c; padding-left: 4px; flex: none; }
    .menus { display: flex; gap: 12px; padding-left: 4px; flex: 1; }
    .menus button { white-space: nowrap; line-height: 18px; }
    .help { width: 200px; height: 18px; background: #fff; border-left: 1px solid #9aa6b8; padding: 0 2px; }
    .help::placeholder { color: #8c8c8c; opacity: 1; }
    .info { display: flex; align-items: center; height: 19px; border: 1px solid #b4b2a4; border-top: 0; border-radius: 0 0 3px 3px; background: #f6f4ec; }
    .info .tool { width: 18px; height: 18px; }
    .info .tool.narrow { width: 10px; }
    .info .sep { border-left: 1px solid #c5c2b2; }
    .info .ico { width: 16px; height: 16px; }
    .win { display: flex; padding-left: 6px; }
    .win button { width: 18px; height: 18px; display: grid; place-items: center; }
    .win svg { width: 12px; height: 12px; }

    .bars { display: flex; gap: 2px; flex: none; height: 28px; }
    .bar { display: flex; align-items: center; border: 1px solid #aca899; border-top-color: #fff; border-left-color: #fff; flex: none; }
    .bars .bar:first-child { border-left: 0; }
    .b1 { padding-left: 13px; width: 238px; }
    .b2 { padding-left: 10px; padding-right: 2px; }
    .b3 { padding-left: 13px; width: 409px; }
    .b4 { padding: 0 2px 0 10px; gap: 6px; }
    .second { height: 30px; border-bottom: 1px solid #8d8b80; padding-top: 1px; }
    .tool { width: 23px; height: 22px; display: grid; place-items: center; flex: none; overflow: hidden; }
    .tool.narrow { width: 12px; justify-content: center; }
    .div { width: 2px; height: 20px; margin: 0 2px; border-left: 1px solid #b5b2a2; border-right: 1px solid #fff; flex: none; }

    .combo { display: flex; align-items: center; height: 22px; background: #fff; border: 1px solid #7f9db9; flex: none; }
    .combo select { appearance: none; flex: 1; min-width: 0; height: 100%; padding-left: 7px; }
    .combo .arrow { width: 16px; height: 18px; margin-right: 1px; background: linear-gradient(#dbe6fd, #b5c9f4); border: 1px solid #c3d2f5; border-radius: 2px; pointer-events: none; flex: none; display: grid; place-items: center; }
    .arrow svg, .sb svg { width: 14px; height: 14px; display: block; }
    .flags { display: flex; padding-left: 3px; }
    .flags .ico { width: 16px; height: 16px; }
    .combo .flags + select { padding-left: 2px; }
    .rule { height: 1px; background: #000; margin-left: 4px; }
    .ws { width: 174px; } .lay { width: 299px; } .col { width: 150px; } .lt { width: 160px; } .lw { width: 125px; }
    .lt .rule { width: 60px; } .lw .rule { width: 35px; }
    .combo .rule + select { padding-left: 4px; }
    .ps { width: 120px; background: #ece9d8; border-color: #cac8bb; color: #a09d8e; }
    .ps select { color: #a09d8e; opacity: 1; }
    .combo.ps .arrow { background: #eeece0; border-color: #d8d5c6; }
    .ps path { stroke: #c5c2b2; }

    .main { display: flex; flex: 1; min-height: 0; }
    .left { display: flex; flex-direction: column; flex: 1; min-width: 0; border-right: 2px solid #fff; margin-right: 4px; }
    .work { display: flex; flex: 1; min-height: 0; border-bottom: 2px solid #fff; }
    .vbar { display: flex; flex-direction: column; align-self: flex-start; padding: 8px 0 4px; border: 1px solid #aca899; border-top-color: #fff; border-left-color: #fff; }
    .v1 { width: 25px; } .v2 { width: 26px; }
    .canvas { flex: 1; min-width: 0; margin-left: 1px; border: solid #8d8b80; border-width: 0 0 0 2px; }

    .cmd { margin-top: 4px; border-top: 2px solid #000; height: 67px; padding: 10px 6px 1px 16px; flex: none; display: flex; }
    .cmdbox { flex: 1; display: flex; flex-direction: column; border-left: 2px solid #333; border-top: 2px solid #222; font-family: "Liberation Mono", "Noto Sans CJK SC", monospace; font-size: 15px; line-height: 16px; }
    .hist { display: flex; height: 32px; background: #fff; border-bottom: 1px solid #a5a296; }
    .hist output { flex: 1; padding-left: 1px; font-size: 16px; }
    .vs { width: 17px; display: flex; flex-direction: column; }
    .prompt { display: flex; flex: 1; }
    .prompt label { background: #fff; padding-left: 1px; line-height: 18px; }
    .prompt input { background: #fff; flex: 1; min-width: 0; }
    .hs { width: 86px; display: flex; align-items: center; padding-left: 2px; }
    .track { width: 66px; display: flex; background: #f5f4ee; }
    .track .sb:last-child { margin-left: auto; }
    .sb { width: 16px; height: 15px; display: grid; place-items: center; background: linear-gradient(#dbe6fd, #b5c9f4); border: 1px solid #a9bdec; border-radius: 2px; }

    .dock { width: 254px; display: flex; border-left: 2px solid #000; flex: none; background: #ededea; }
    .panel { flex: 1; padding: 0 3px 0 2px; display: flex; flex-direction: column; border-right: 1px solid #fff; }
    .phead { height: 19px; display: flex; justify-content: flex-end; align-items: center; padding-right: 5px; }
    .phead button { width: 12px; height: 12px; border: 1px solid #aca899; border-left-color: #fff; border-top-color: #fff; display: grid; place-items: center; background: #fff; }
    .phead svg { width: 8px; height: 8px; }
    .group { display: flex; border: 1px solid #a5aaae; border-bottom: 0; }
    .group:last-child { border-bottom: 1px solid #a5aaae; }
    .strip { width: 22px; background: #dddbd4; flex: none; padding: 4px 0 0 3px; }
    .emblem { width: 24px; height: 24px; display: block; position: relative; }
    .hot .strip { background: linear-gradient(90deg, #f7a44e, #fbc98b); }
    .rows { flex: 1; padding: 3px 4px 3px 8px; min-width: 0; }
    .row { display: flex; align-items: center; justify-content: flex-end; height: 25px; }
    .row .tool { width: 22px; }
    .row .sep { border-left: 1px solid #6b6b66; }
    .row .active { background: linear-gradient(#fbb55f, #fdd08f); height: 24px; }
    .row .combo { flex: 1; height: 21px; }
    .row .combo select { padding-left: 3px; }
    .lead { width: 22px; display: grid; place-items: center; flex: none; }
    .split { margin: 3px -4px 0 -8px; padding: 2px 4px 0 0; border-top: 1px dashed #a5aaae; height: 28px; }
    .slide { flex: 1; min-width: 0; height: 16px; border: 1px solid #7f9db9; background-color: #eef0f2; margin-right: 3px; display: grid; }
    .slide input { appearance: none; width: 100%; height: 14px; grid-area: 1/1; background: linear-gradient(#9fb3c6, #9fb3c6) 2px 6px / calc(100% - 4px) 2px no-repeat; }
    .slide input::-webkit-slider-thumb { appearance: none; width: 5px; height: 12px; background: #eef3f8; border: 1px solid #6784a3; }
    .ticks { grid-area: 1/1; align-self: end; height: 3px; margin: 0 10px; background: repeating-linear-gradient(90deg, #8fa5bb 0 1px, transparent 1px 8px); }
    .ticks.one { margin: 0 50px; background: linear-gradient(#8fa5bb, #8fa5bb) 0 0 / 1px 3px no-repeat; }
    .val { width: 55px; height: 16px; border: 1px solid #7f9db9; background: #eef0f2; font: 10px/14px "DejaVu Sans Mono", monospace; flex: none; }
    .prog { flex: 1; height: 17px; border: 1px solid #7f9db9; background: #fff; padding: 1px; display: grid; grid-template-rows: 6px 1fr; gap: 2px; }
    .prog span { background: #7f9db9; }
    .prog span:last-child { background: linear-gradient(#fff, #fff) 40px 100% / 1px 3px no-repeat, linear-gradient(#fff, #fff) 80px 100% / 1px 3px no-repeat, linear-gradient(#fff, #fff) 120px 100% / 1px 3px no-repeat, #7f9db9; }

    .title { width: 24px; background: #ece9d8; display: flex; flex-direction: column; align-items: center; border-right: 2px solid #d6d2bf; padding-top: 4px; }
    .title h2 { margin: 238px 0 0; font: bold 13px/18px "Noto Sans CJK SC", sans-serif; writing-mode: vertical-rl; text-orientation: sideways; transform: rotate(180deg); white-space: nowrap; }
    .dash { margin-inline: 12px; }

    .status { height: 22px; border-top: 2px solid #9c9a8d; padding: 2px 6px; flex: none; font-family: "Noto Sans CJK SC", sans-serif; background: linear-gradient(#f1efe3, #e6e3cf); }
    .tip { position: absolute; left: 764px; top: 94px; background: #ffffe1; border: 1px solid #000; padding: 0 2px; line-height: 14px; }
    .logo { position: absolute; right: 10px; bottom: 4px; color: #1ea9dc; text-align: center; font: bold 29px/42px "Noto Sans CJK SC", sans-serif; }
    .logo small { display: block; font: 15px/18px "DejaVu Sans", sans-serif; }
  `;

  private menus = [
    ["文件", "F"], ["编辑", "E"], ["视图", "V"], ["插入", "I"], ["格式", "O"], ["工具", "T"],
    ["绘图", "D"], ["标注", "N"], ["修改", "M"], ["窗口", "W"], ["帮助", "H"],
  ];

  private modify: Tool[] = ["erase", "copyobj", "mirror", "offset", "array", "move", "rotate", "scale", "stretch", "trim", "extend", "breakpt", "breakln", "join", "chamfer", "fillet", "explode"];
  private draw: Tool[] = ["line", "xline", "pline", "polygon", "rect", "arc", "circle", "cloud", "spline", "ellipse", "ellarc", "insblock", "mkblock", "point", "hatch", "gradient", "region", "table", "text"];
  private standard: Tool[][] = [
    ["newfile", "open", "save"],
    ["print", "preview", "publish", "web"],
    ["cut", "copy", "paste", "brush", "block"],
    ["undo", { name: "down", narrow: true }, "redo", { name: "downoff", narrow: true }],
    ["pan", "zoom", "zoomwin", "zoomprev"],
    ["props", "design", "palettes", "sheets", "markup", "calc"],
    ["help"],
  ];

  private row(...t: Tool[]) {
    return html`<div class="row">${t.map(tool)}</div>`;
  }

  private slider(icon: string, label: string, pos: number, value: string, one: boolean) {
    return html`<div class="row">
      <span class="lead">${glyph(icon)}</span>
      <div class="slide"><span class=${classMap({ ticks: true, one })}></span>
        <input type="range" aria-label=${label} min="0" max="100" .value=${String(pos)}></div>
      <input class="val" aria-label=${label} .value=${value}>
    </div>`;
  }

  render() {
    return html`
      <svg class="defs" aria-hidden="true"><defs>
        <linearGradient id="sheet" x2="1" y2="1"><stop stop-color="#fff"/><stop offset="1" stop-color="#b4cfea"/></linearGradient>
        <linearGradient id="steel" x2="1" y2="1"><stop stop-color="#bcd3ea"/><stop offset="1" stop-color="#5279a8"/></linearGradient>
        <linearGradient id="steelv" x2="0" y2="1"><stop stop-color="#8fb0d3"/><stop offset="1" stop-color="#cfdff0"/></linearGradient>
        <linearGradient id="steelh"><stop stop-color="#7799bd"/><stop offset=".4" stop-color="#eaf2fa"/><stop offset="1" stop-color="#486f9d"/></linearGradient>
        <linearGradient id="olive" x2="1" y2="1"><stop stop-color="#23273a"/><stop offset="1" stop-color="#c3c46a"/></linearGradient>
        <radialGradient id="ball" cx=".38" cy=".32" r=".7"><stop stop-color="#e4eefa"/><stop offset=".5" stop-color="#87a8d0"/><stop offset="1" stop-color="#44689a"/></radialGradient>
        <radialGradient id="deep" cx=".35" cy=".3" r=".7"><stop stop-color="#e4e9fb"/><stop offset=".4" stop-color="#5c74bd"/><stop offset="1" stop-color="#1c2c6c"/></radialGradient>
        <radialGradient id="teal" cx=".35" cy=".3" r=".7"><stop stop-color="#d4f4fa"/><stop offset=".5" stop-color="#41a4bd"/><stop offset="1" stop-color="#1b5a7c"/></radialGradient>
      </defs></svg>

      <header class="menubar">
        ${glyph("app")}
        <nav class="menus">
          ${this.menus.map(([t, k]) => html`<button>${t}<span class="mono">(<u>${k}</u>)</span></button>`)}
          <button class="mono">E<u>x</u>press</button>
        </nav>
        <input class="help" aria-label="help" placeholder="键入问题以获取帮助">
        <div class="info">${tool("search")}${tool({ name: "down", narrow: true })}${tool(S("dish"))}${tool(S("star"))}</div>
        <div class="win">
          <button aria-label="minimize"><svg viewBox="0 0 12 12"><path d="M3 10h6" stroke="#444" stroke-width="2"/></svg></button>
          <button aria-label="restore"><svg viewBox="0 0 12 12"><path d="M4 4V2h7v5H9M1 5.500h7v5H1z" fill="none" stroke="#444" stroke-width="1.500"/></svg></button>
          <button aria-label="close"><svg viewBox="0 0 12 12"><path d="M2 2l8 8M10 2l-8 8" stroke="#444" stroke-width="2"/></svg></button>
        </div>
      </header>

      <div class="bars">
        <div class="bar b1">${combo("workspace", "三维建模", { cls: "ws" })}${tool("gear")}${tool("home")}</div>
        <div class="bar b2">${this.standard.map((g, i) => html`${i ? html`<span class="div"></span>` : nothing}${g.map(tool)}`)}</div>
      </div>
      <div class="bars second">
        <div class="bar b3">${tool("layer")}${combo("layer", "小括号", { cls: "lay", flags: LAYER_FLAGS })}${["layermake", "layerprev", "layerstate"].map(tool)}</div>
        <div class="bar b4">
          ${combo("color", "ByLayer", { cls: "col", flags: ["swatch"] })}
          ${combo("linetype", "ByLayer", { cls: "lt", rule: true })}
          ${combo("lineweight", "ByLayer", { cls: "lw", rule: true })}
          ${combo("plot style", "随颜色", { cls: "ps", disabled: true })}
        </div>
      </div>

      <div class="main">
        <div class="left">
          <div class="work">
            <div class="vbar v1">${this.modify.map(tool)}</div>
            <div class="vbar v2">${this.draw.map(tool)}</div>
            <wire-scene class="canvas"></wire-scene>
          </div>
          <div class="cmd"><div class="cmdbox">
            <div class="hist"><output>正在重生成模型。</output>
              <div class="vs"><button class="sb" aria-label="up">${chevron("M4 10l4-4 4 4")}</button><button class="sb" aria-label="down">${chevron(DOWN)}</button></div>
            </div>
            <div class="prompt"><label for="cli">命令:</label><input id="cli">
              <div class="hs"><div class="track">
                <button class="sb" aria-label="left">${chevron("M10 4l-4 4 4 4")}</button>
                <button class="sb" aria-label="thumb"><svg viewBox="0 0 16 16"><path d="M4 5v7M7 5v7M10 5v7M13 5v7" stroke="#8ea8e0"/></svg></button>
                <button class="sb" aria-label="right">${chevron("M6 4l4 4-4 4")}</button>
              </div></div>
            </div>
          </div></div>
        </div>

        <aside class="dock">
          <div class="panel">
            <div class="phead"><button aria-label="close"><svg viewBox="0 0 8 8"><path d="M1 1l6 6M7 1L1 7" stroke="#000" stroke-width="1.500"/></svg></button></div>
            ${group("solids", "bigsolid", html`
              ${this.row("polysolid", "box", "wedge", "cone", "sphere", "cylinder", "pyramid", "torus")}
              ${this.row("ucs", "helix", S("extrude"), "presspull", "revolve", "sweep", "loft", "plane")}
              ${this.row("slice", S("union"), "subtract", "intersect", S("solidedit"), "align3d")}`)}
            ${group("navigate", "bigcompass", html`
              ${this.row("pan", "zoom", S("orbit"), "camera", "walk", S("snapshot"), { name: "parallel", sep: true, active: true }, "perspective")}
              <div class="row"><span class="lead">${glyph("prevview")}</span>${combo("view", "未保存的当前视图")}</div>`)}
            ${group("visual", "bigvisual", html`
              ${this.row("glassbox", "vsphere", "colorbox", S("vmanage"), "vcard")}
              <div class="row"><span class="lead"></span>${combo("visual style", "二维线框")}</div>`)}
            ${group("light", "biglight", html`
              ${this.row("lightoff", { name: "sunlight", active: true }, "sky", "lightlist")}
              ${this.slider("calendar", "date", 71, "2009-9-21", false)}
              ${this.slider("clock", "time", 62, "15:00", true)}`)}
            ${group("material", "bigmaterial", html`
              ${this.row("vsphere", "attach", S("matlayer"), "matcard")}
              <div class="row split">${["matbrush", "mapping"].map(tool)}</div>`, "hot")}
            ${group("render", "bigteapot", html`
              ${this.row("render", "renderwin")}
              <div class="row"><span class="lead"></span>${combo("quality", "高")}</div>
              <div class="row"><span class="lead">${glyph("cancel")}</span><div class="prog" role="progressbar" aria-label="render"><span></span><span></span></div></div>`)}
            ${group("layers", "biglayer", html`
              ${this.row("layermake", "layer")}
              <div class="row"><span class="lead"></span>${combo("layer state", "未保存的图层状态")}${tool("layerstate")}</div>
              <div class="row"><span class="lead">${glyph("layerprev")}</span>${combo("current layer", "小括号", { flags: LAYER_FLAGS })}</div>`)}
          </div>
          <div class="title">${glyph("palettes")}<h2>常规光源<span class="dash">-</span>材质</h2></div>
        </aside>
      </div>

      <footer class="status">对象特性工具栏</footer>
      <div class="tip" role="tooltip">线宽控制</div>
      <div class="logo">三维网<small>3DPortal.cn</small></div>
    `;
  }
}
